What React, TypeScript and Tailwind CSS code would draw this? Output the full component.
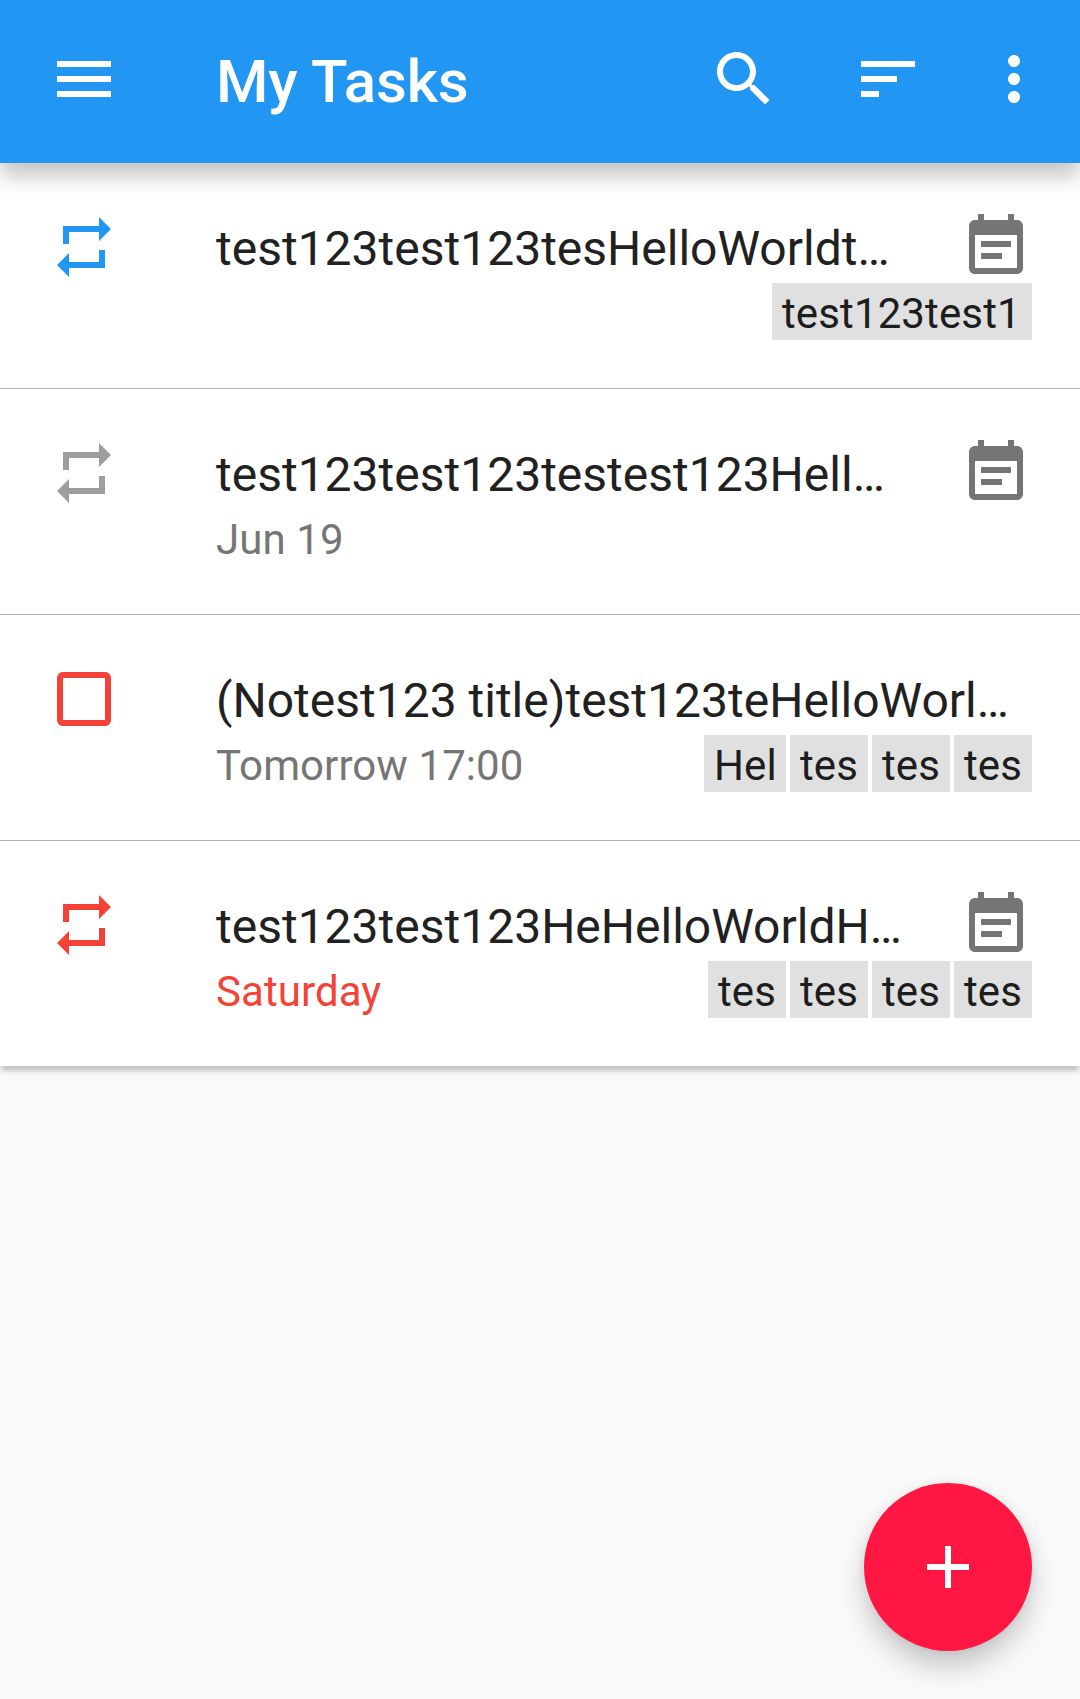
import React from "react";

const paths = {
  menu: "M3 18h18v-2H3v2zm0-5h18v-2H3v2zm0-7v2h18V6H3z",
  search:
    "M15.5 14h-.79l-.28-.27C15.41 12.59 16 11.11 16 9.5 16 5.91 13.09 3 9.5 3S3 5.91 3 9.5 5.91 16 9.5 16c1.61 0 3.09-.59 4.23-1.57l.27.28v.79l5 4.99L20.49 19l-4.99-5zm-6 0C7.01 14 5 11.99 5 9.5S7.01 5 9.5 5 14 7.01 14 9.5 11.99 14 9.5 14z",
  sort: "M3 18h6v-2H3v2zM3 6v2h18V6H3zm0 7h12v-2H3v2z",
  more: "M12 8c1.1 0 2-.9 2-2s-.9-2-2-2-2 .9-2 2 .9 2 2 2zm0 2c-1.1 0-2 .9-2 2s.9 2 2 2 2-.9 2-2-.9-2-2-2zm0 6c-1.1 0-2 .9-2 2s.9 2 2 2 2-.9 2-2-.9-2-2-2z",
  repeat: "M7 7h10v3l4-4-4-4v3H5v6h2V7zm10 10H7v-3l-4 4 4 4v-3h12v-6h-2v4z",
  box: "M19 5v14H5V5h14m0-2H5c-1.1 0-2 .9-2 2v14c0 1.1.9 2 2 2h14c1.1 0 2-.9 2-2V5c0-1.1-.9-2-2-2z",
  note: "M17 10H7v2h10v-2zm2-7h-1V1h-2v2H8V1H6v2H5c-1.11 0-1.99.9-1.99 2L3 19c0 1.1.89 2 2 2h14c1.1 0 2-.9 2-2V5c0-1.1-.9-2-2-2zm0 16H5V8h14v11zm-5-5H7v2h7v-2z",
  add: "M19 13h-6v6h-2v-6H5v-2h6V5h2v6h6v2z",
};

function Icon({ name, className = "" }: { name: keyof typeof paths; className?: string }) {
  return (
    <svg viewBox="0 0 24 24" fill="currentColor" className={`size-[72px] shrink-0 ${className}`}>
      <path d={paths[name]} />
    </svg>
  );
}

type Tag = { label: string; width: string };

type Task = {
  icon: "repeat" | "box";
  color: string;
  title: string;
  note?: boolean;
  due?: string;
  dueColor?: string;
  tags: Tag[];
};

const tes: Tag = { label: "tes", width: "w-[78px]" };
const hel: Tag = { label: "Hel", width: "w-[82px]" };
const long: Tag = { label: "test123test1", width: "w-[260px]" };

const tasks: Task[] = [
  { icon: "repeat", color: "text-[#2196f3]", title: "test123test123tesHelloWorldt…", note: true, tags: [long] },
  { icon: "repeat", color: "text-[#9e9e9e]", title: "test123test123testest123Hell…", note: true, due: "Jun 19", dueColor: "text-[#757575]", tags: [] },
  { icon: "box", color: "text-[#f44336]", title: "(Notest123 title)test123teHelloWorl…", due: "Tomorrow 17:00", dueColor: "text-[#757575]", tags: [hel, tes, tes, tes] },
  { icon: "repeat", color: "text-[#f44336]", title: "test123test123HeHelloWorldH…", note: true, due: "Saturday", dueColor: "text-[#f44336]", tags: [tes, tes, tes, tes] },
];

function TaskRow({ task }: { task: Task }) {
  return (
    <li className="flex h-[225px] bg-white pt-12 pr-12 pl-12">
      <Icon name={task.icon} className={task.color} />
      <div className="ml-24 flex min-w-0 flex-1 flex-col">
        <div className="flex h-[72px] justify-between">
          <div className="pt-[10px] text-[48px] leading-[56px] whitespace-nowrap text-[#212121]">{task.title}</div>
          {task.note && <Icon name="note" className="text-[#757575]" />}
        </div>
        <div className="flex h-[57px] items-start justify-between text-[42px] leading-[49px]">
          <span className={`pt-[6px] tracking-[0.08px] ${task.dueColor ?? ""}`}>{task.due}</span>
          <div className="flex gap-1">
            {task.tags.map((tag, i) => (
              <span
                key={i}
                className={`h-[57px] bg-[#e0e0e0] pt-[6px] pl-[10px] tracking-[0.12px] whitespace-nowrap text-[#1d1d1d] ${tag.width}`}
              >
                {tag.label}
              </span>
            ))}
          </div>
        </div>
      </div>
    </li>
  );
}

export default function App() {
  return (
    <div className="relative h-[1699px] w-[1080px] overflow-hidden bg-[#fafafa] font-['Roboto',sans-serif]">
      <header className="relative z-10 flex h-[163px] items-center bg-[#2196f3] pr-[30px] pb-[5px] pl-12 text-white shadow-[0_13px_20px_0_rgba(0,0,0,0.23)]">
        <Icon name="menu" />
        <h1 className="ml-24 flex-1 pt-[5px] text-[60px] leading-[70px] font-medium tracking-[-0.1px]">My Tasks</h1>
        <Icon name="search" className="mr-[72px]" />
        <Icon name="sort" className="mr-[54px]" />
        <Icon name="more" />
      </header>
      <ul className="flex flex-col gap-px bg-[#b4b4b4] shadow-[0_6px_5px_-1px_rgba(0,0,0,0.22)]">
        {tasks.map((task, i) => (
          <TaskRow key={i} task={task} />
        ))}
      </ul>
      <button
        aria-label="Add task"
        className="absolute right-12 bottom-12 flex size-[168px] items-center justify-center rounded-full bg-[#ff1744] text-white shadow-[0_16px_30px_-2px_rgba(0,0,0,0.23),0_0_10px_rgba(0,0,0,0.06)]"
      >
        <Icon name="add" />
      </button>
    </div>
  );
}
